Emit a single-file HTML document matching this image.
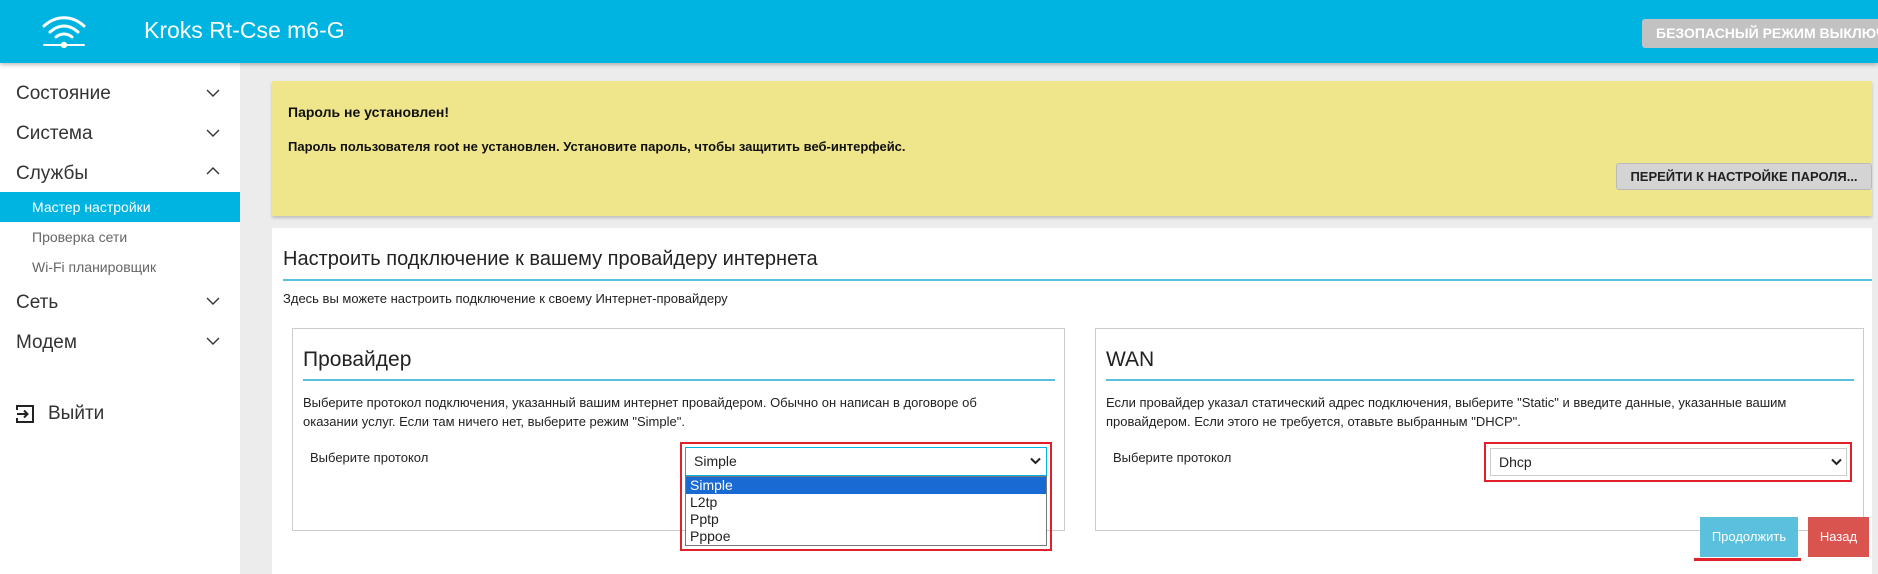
<!DOCTYPE html>
<html><head><meta charset="utf-8"><style>
*{box-sizing:border-box;margin:0;padding:0}
body{width:1878px;height:574px;overflow:hidden;background:#ececec;font-family:"Liberation Sans",sans-serif;position:relative;color:#222}
.a{position:absolute;white-space:nowrap}
#hdr{left:0;top:0;width:1878px;height:63px;background:#00b4e1;box-shadow:0 2px 4px rgba(0,0,0,.25);z-index:2}
#side{left:0;top:63px;width:240px;height:511px;background:#fff}
.mi{font-size:19px;color:#333;left:16px}
.chev{left:206px;width:14px;height:14px}
.si{font-size:14px;color:#666;left:32px}
.card{background:#fff}
.sel{border:1px solid #ccc;background:#fff;font-size:14px;padding-left:8px;line-height:26px}
</style></head><body>
<div class="a" id="hdr">
<svg class="a" style="left:40px;top:14px" width="48" height="34" viewBox="0 0 48 34" fill="none" stroke="#fff" stroke-width="3" stroke-linecap="round">
<path d="M4 12 C16 1 32 1 44 12"/><path d="M10 18 C19 10 29 10 38 18"/><path d="M16 23 C21 19 27 19 32 23"/>
<path d="M4 31 H44" stroke-width="2"/><circle cx="24" cy="31" r="3.2" fill="#fff" stroke="none"/></svg>
<div class="a" style="left:144px;top:17px;font-size:23px;color:#fff">Kroks Rt-Cse m6-G</div>
<div class="a" style="left:1642px;top:19px;width:240px;height:29px;background:#c2c2c2;border-radius:3px;color:#fff;font-weight:bold;font-size:14px;line-height:29px;padding-left:14px">БЕЗОПАСНЫЙ РЕЖИМ ВЫКЛЮЧЕН</div>
</div>
<div class="a" id="side"></div>
<div class="a mi" style="top:83px">Состояние</div>
<div class="a mi" style="top:123px">Система</div>
<div class="a mi" style="top:163px">Службы</div>
<svg class="a chev" style="top:86px" viewBox="0 0 14 14"><path d="M1 4 L7 10 L13 4" stroke="#333" stroke-width="1.4" fill="none"/></svg>
<svg class="a chev" style="top:126px" viewBox="0 0 14 14"><path d="M1 4 L7 10 L13 4" stroke="#333" stroke-width="1.4" fill="none"/></svg>
<svg class="a chev" style="top:164px" viewBox="0 0 14 14"><path d="M1 10 L7 4 L13 10" stroke="#333" stroke-width="1.4" fill="none"/></svg>
<div class="a" style="left:0;top:192px;width:240px;height:30px;background:#00b4e1"></div>
<div class="a si" style="top:199px;color:#fff">Мастер настройки</div>
<div class="a si" style="top:229px">Проверка сети</div>
<div class="a si" style="top:259px">Wi-Fi планировщик</div>
<div class="a mi" style="top:292px">Сеть</div>
<div class="a mi" style="top:332px">Модем</div>
<svg class="a chev" style="top:294px" viewBox="0 0 14 14"><path d="M1 4 L7 10 L13 4" stroke="#333" stroke-width="1.4" fill="none"/></svg>
<svg class="a chev" style="top:334px" viewBox="0 0 14 14"><path d="M1 4 L7 10 L13 4" stroke="#333" stroke-width="1.4" fill="none"/></svg>
<svg class="a" style="left:16px;top:405px" width="20" height="18" viewBox="0 0 20 18" fill="none" stroke="#222" stroke-width="2"><path d="M1 5 V1 H17 V17 H1 V13"/><path d="M1 9 H11 M8 5.5 L11.5 9 L8 12.5"/></svg>
<div class="a mi" style="left:48px;top:403px">Выйти</div>

<div class="a" style="left:272px;top:81px;width:1600px;height:135px;background:#efe68c;box-shadow:0 2px 3px rgba(0,0,0,.2)"></div>
<div class="a" style="left:288px;top:104px;font-size:14px;font-weight:bold;color:#111">Пароль не установлен!</div>
<div class="a" style="left:288px;top:139px;font-size:13px;font-weight:bold;color:#111">Пароль пользователя root не установлен. Установите пароль, чтобы защитить веб-интерфейс.</div>
<div class="a" style="left:1616px;top:163px;width:256px;height:27px;background:#d4d4d4;border:1px solid #bbb;border-radius:3px;font-size:13px;font-weight:bold;line-height:25px;text-align:center;color:#222">ПЕРЕЙТИ К НАСТРОЙКЕ ПАРОЛЯ...</div>

<div class="a card" style="left:272px;top:228px;width:1600px;height:346px"></div>
<div class="a" style="left:283px;top:248px;font-size:20px;color:#222">Настроить подключение к вашему провайдеру интернета</div>
<div class="a" style="left:283px;top:279px;width:1589px;height:2px;background:#5bc0de"></div>
<div class="a" style="left:283px;top:291px;font-size:13px">Здесь вы можете настроить подключение к своему Интернет-провайдеру</div>

<div class="a" style="left:292px;top:328px;width:773px;height:203px;border:1px solid #ccc"></div>
<div class="a" style="left:303px;top:348px;font-size:21px">Провайдер</div>
<div class="a" style="left:303px;top:379px;width:752px;height:2px;background:#5bc0de"></div>
<div class="a" style="left:303px;top:393px;font-size:13px;line-height:19px;white-space:normal;width:700px">Выберите протокол подключения, указанный вашим интернет провайдером. Обычно он написан в договоре об оказании услуг. Если там ничего нет, выберите режим "Simple".</div>
<div class="a" style="left:310px;top:450px;font-size:13px">Выберите протокол</div>

<div class="a" style="left:1095px;top:328px;width:769px;height:203px;border:1px solid #ccc"></div>
<div class="a" style="left:1106px;top:348px;font-size:21px">WAN</div>
<div class="a" style="left:1106px;top:379px;width:748px;height:2px;background:#5bc0de"></div>
<div class="a" style="left:1106px;top:393px;font-size:13px;line-height:19px;white-space:normal;width:750px">Если провайдер указал статический адрес подключения, выберите "Static" и введите данные, указанные вашим провайдером. Если этого не требуется, отавьте выбранным "DHCP".</div>
<div class="a" style="left:1113px;top:450px;font-size:13px">Выберите протокол</div>

<div class="a" style="left:680px;top:442px;width:372px;height:109px;border:2px solid #e0202a"></div>
<div class="a sel" style="left:685px;top:447px;width:362px;height:29px;border-color:#00b4e1">Simple</div>
<svg class="a" style="left:1030px;top:457px" width="11" height="8" viewBox="0 0 11 8"><path d="M1 1.5 L5.5 6 L10 1.5" stroke="#222" stroke-width="2" fill="none"/></svg>
<div class="a" style="left:685px;top:476px;width:362px;height:70px;background:#fff;border:1px solid #777;font-size:14px;line-height:17px">
<div style="background:#1a6ad3;color:#fff;padding-left:4px">Simple</div><div style="padding-left:4px">L2tp</div><div style="padding-left:4px">Pptp</div><div style="padding-left:4px">Pppoe</div></div>

<div class="a" style="left:1484px;top:442px;width:368px;height:40px;border:2px solid #e0202a"></div>
<div class="a sel" style="left:1490px;top:448px;width:357px;height:28px">Dhcp</div>
<svg class="a" style="left:1831px;top:458px" width="11" height="8" viewBox="0 0 11 8"><path d="M1 1.5 L5.5 6 L10 1.5" stroke="#222" stroke-width="2" fill="none"/></svg>

<div class="a" style="left:1700px;top:517px;width:98px;height:40px;background:#5bc0de;color:#fff;font-size:13px;line-height:40px;text-align:center">Продолжить</div>
<div class="a" style="left:1694px;top:558px;width:107px;height:3px;background:#e0202a"></div>
<div class="a" style="left:1808px;top:517px;width:61px;height:40px;background:#d9534f;color:#fff;font-size:13px;line-height:40px;text-align:center">Назад</div>
</body></html>
